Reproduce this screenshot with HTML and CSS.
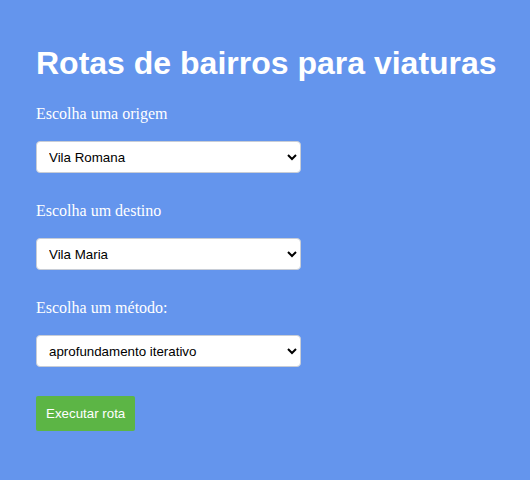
FILE: index.html
```html
<!DOCTYPE html>
<html lang="pt">
<head>
<meta charset="utf-8">
<title>Rotas de bairros para viaturas</title>
<link rel="stylesheet" href="styles.css">
</head>
<body>
<main class="page">
  <h1 class="title">Rotas de bairros para viaturas</h1>
  <form class="form">
    <div class="field">
      <label class="label" for="origem">Escolha uma origem</label>
      <select class="select" id="origem">
        <option>Vila Romana</option>
      </select>
    </div>
    <div class="field">
      <label class="label" for="destino">Escolha um destino</label>
      <select class="select" id="destino">
        <option>Vila Maria</option>
      </select>
    </div>
    <div class="field">
      <label class="label" for="metodo">Escolha um método:</label>
      <select class="select" id="metodo">
        <option>aprofundamento iterativo</option>
      </select>
    </div>
    <div class="actions">
      <button type="button" class="button">Executar rota</button>
    </div>
  </form>
</main>
</body>
</html>
```

FILE: styles.css
```css
html, body {
  margin: 0;
  padding: 0;
  background: #6495ed;
}

.page {
  padding: 45px 36px 40px;
  color: #ffffff;
  font-family: "Liberation Serif", "Times New Roman", serif;
}

.title {
  margin: 0 0 23px;
  font-family: "Liberation Sans", Arial, sans-serif;
  font-size: 32px;
  font-weight: bold;
  line-height: 37px;
  white-space: nowrap;
  color: #ffffff;
}

.form {
  display: flex;
  flex-direction: column;
  gap: 29px;
}

.field {
  display: flex;
  flex-direction: column;
  gap: 18px;
}

.label {
  font-size: 16px;
  line-height: 18px;
  color: #ffffff;
}

.select {
  width: 265px;
  height: 32px;
  padding: 0 8px;
  box-sizing: border-box;
  background: #ffffff;
  border: 1px solid #c8cdd6;
  border-radius: 4px;
  font-family: "Liberation Sans", Arial, sans-serif;
  font-size: 13.33px;
  color: #000000;
}

.actions {
  display: flex;
}

.button {
  height: 35px;
  padding: 0 10px;
  border: none;
  border-radius: 2px;
  background: #5cb545;
  color: #ffffff;
  font-family: "Liberation Sans", Arial, sans-serif;
  font-size: 13.33px;
}
```
